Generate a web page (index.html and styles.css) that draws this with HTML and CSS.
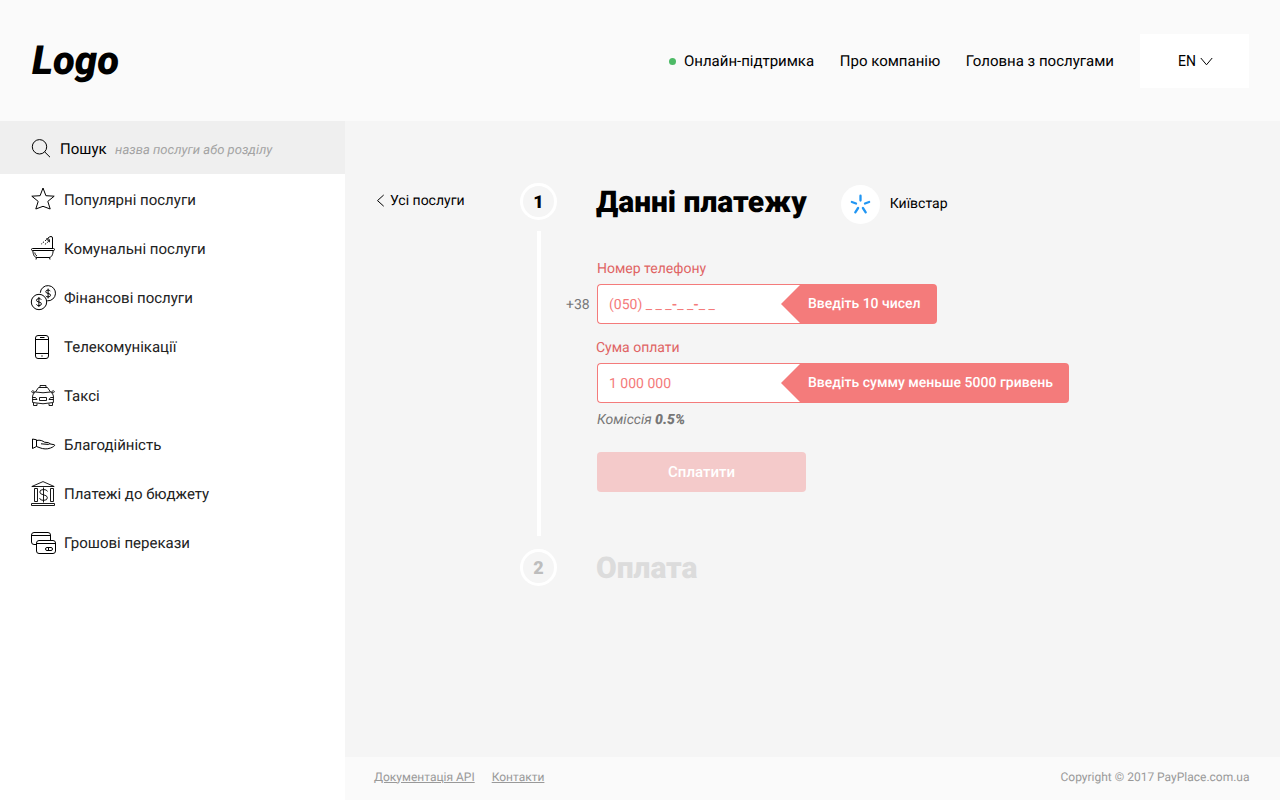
FILE: index.html
```html
<!DOCTYPE html>
<html lang="uk">
<head>
<meta charset="utf-8">
<title>PayPlace</title>
<link rel="stylesheet" href="styles.css">
</head>
<body>
<div class="page">
  <header class="header">
    <a class="logo">Logo</a>
    <nav class="topnav">
      <a class="topnav-link support"><span class="dot"></span>Онлайн-підтримка</a>
      <a class="topnav-link about">Про компанію</a>
      <a class="topnav-link home">Головна з послугами</a>
      <button class="lang">EN<svg class="chevron" width="13" height="9" viewBox="0 0 13 9"><path d="M.8 1 6.500 7.800 12.200 1"/></svg></button>
    </nav>
  </header>
  <div class="body">
    <aside class="sidebar">
      <div class="search">
        <svg class="icon" width="20" height="20" viewBox="0 0 20 20"><circle cx="8.500" cy="7.800" r="7.200"/><path d="M13.600 12.800 19 18.200"/></svg>
        <span class="search-label">Пошук</span><span class="search-hint">назва послуги або розділу</span>
      </div>
      <ul class="menu">
        <li class="menu-item"><svg class="icon" width="26" height="26" viewBox="0 0 26 26"><path d="M13 1 15.900 8.700 24.200 9.200 17.800 14.400 20.200 22 13 19.300 5.800 22 8.200 14.400 1.800 9.200 10.100 8.700Z"/></svg><span class="label-popular">Популярні послуги</span></li>
        <li class="menu-item"><svg class="icon" width="26" height="26" viewBox="0 0 26 26"><rect x="1.500" y="12.500" width="23" height="2" rx="1"/><path d="M2.800 14.500C3.200 19 4.500 21.500 7 21.500H19C21.500 21.500 22.800 19 23.200 14.500M6.500 21.500 6 23.500M19.500 21.500 20 23.500M4.800 16.500C5 18 5.600 19.300 7 20M22.500 12.500V2Q22.500.5 21 .5 19 .5 18 2.200M16 2.500 20 6.200M16.800 3C17.600 1.800 20.300 3.200 19.300 5.400"/><path class="drops" d="M16.300 3.800 11 8.300M18.500 5.500 14 9.200"/></svg><span class="label-utility">Комунальні послуги</span></li>
        <li class="menu-item"><svg class="icon" width="26" height="26" viewBox="0 0 26 26"><path d="M10.300 7.800A7.600 7.600 0 1 1 17.200 15.800"/><circle cx="9" cy="17" r="7.700"/><path d="M11.300 14.700Q10.900 13.600 8.900 13.600 6.500 13.600 6.500 15.300 6.500 16.700 8.900 17 11.400 17.300 11.400 18.900 11.400 20.600 8.900 20.600 6.800 20.600 6.400 19.400M8.900 12V22M20.300 6.200Q19.900 5.100 18.100 5.100 15.800 5.100 15.800 6.700 15.800 8.100 18.100 8.400 20.500 8.700 20.500 10.300 20.500 11.900 18.100 11.900 16.200 11.900 15.800 10.800M18.100 3.600V13.400"/></svg><span class="label-finance">Фінансові послуги</span></li>
        <li class="menu-item"><svg class="icon" width="26" height="26" viewBox="0 0 26 26"><rect x="5.500" y="1.500" width="13" height="23" rx="2.500"/><path d="M5.500 5.500H18.500M5.500 19.500H18.500M10 3.500H14.500M11.300 22H12.700"/></svg><span class="label-telecom">Телекомунікації</span></li>
        <li class="menu-item"><svg class="icon thin" width="26" height="26" viewBox="0 0 26 26"><path d="M10 4.500V2.500H16V4.500M5.500 9 8.500 4.500H17.500L20.500 9Q13 10.500 5.500 9ZM5.500 9Q3 10 2.600 13V19.500Q13 22 23.400 19.500V13Q23 10 20.500 9M4.800 9Q2.500 6.500 1.500 8.700 2 10 4.300 9.700M21.200 9Q23.500 6.500 24.500 8.700 24 10 21.700 9.700M2.600 14.500H5.500L7 16.500H2.600M23.400 14.500H20.500L19 16.500H23.400M9.500 14.500H16.500V17.500H9.500ZM3.500 20V22.500H7V20.500M22.500 20V22.500H19V20.500"/></svg><span class="label-taxi">Таксі</span></li>
        <li class="menu-item"><svg class="icon" width="26" height="26" viewBox="0 0 26 26"><path d="M2.500 7 6.500 7.800V14.500L2.500 16.500ZM6.500 8.500C10 7.500 13 9 14.500 10.200L18.500 10.700C20.300 11 20 12.500 18 12.400L11 11.800M19.500 11.800 24 12.700C26 13 23.500 15 20.500 16 17 17.500 13 17 10 15.800L6.500 14.500"/></svg><span class="label-charity">Благодійність</span></li>
        <li class="menu-item"><svg class="icon thin" width="26" height="26" viewBox="0 0 26 26"><path d="M1.800 5.500H24.200L13 .6ZM1.500 22.500H24.500V24.500H1.500ZM4.500 7.500H7.500V20.500H4.500ZM20.500 7.500H23.500V20.500H20.500ZM17.500 10.500Q17 8.500 13.500 8.500 9.800 8.500 9.800 11 9.800 13.200 13.500 13.800 17.400 14.500 17.400 16.800 17.400 19.400 13.500 19.400 10 19.400 9.500 17M13.500 6.500V21.500"/></svg><span class="label-budget">Платежі до бюджету</span></li>
        <li class="menu-item"><svg class="icon" width="26" height="26" viewBox="0 0 26 26"><path d="M6 14.500H4Q1.500 14.500 1.500 12V5Q1.500 2.500 4 2.500H18Q20.500 2.500 20.500 5V10M1.500 5.500H20.500M6.500 13.500H25.500"/><rect x="6.500" y="10.500" width="19" height="13" rx="2.500"/><rect x="15.500" y="17.500" width="7" height="3" rx="1.500"/><path d="M18.500 17.500V20.500"/></svg><span class="label-transfer">Грошові перекази</span></li>
      </ul>
    </aside>
    <div class="content">
      <main class="main">
        <a class="back"><svg class="chevron" width="9" height="13" viewBox="0 0 9 13"><path d="M7.700 1 1.500 6.600 7.700 12.200"/></svg>Усі послуги</a>
        <div class="stepper">
          <span class="step">1</span>
          <span class="line"></span>
          <span class="step step-next">2</span>
        </div>
        <div class="payment">
          <div class="heading">
            <h1 class="title">Данні платежу</h1>
            <span class="provider-logo"><svg width="22" height="22" viewBox="0 0 22 22"><path d="M11.500 1.700V6.600M2.900 8 7 9.500M20.100 8 16 9.500M9.100 14 6.300 18.300M13.900 14 16.700 18.300"/></svg></span>
            <span class="provider">Київстар</span>
          </div>
          <form class="form">
            <label class="label phone-label">Номер телефону</label>
            <div class="row">
              <span class="prefix">+38</span>
              <div class="field"><span class="value phone">(050) _ _ _<b>-</b>_ _<b>-</b>_ _</span></div>
              <div class="error error-phone"><span>Введіть 10 чисел</span></div>
            </div>
            <label class="label sum-label">Сума оплати</label>
            <div class="row">
              <span class="prefix"></span>
              <div class="field"><span class="value sum">1 000 000</span></div>
              <div class="error error-sum"><span>Введіть сумму меньше 5000 гривень</span></div>
            </div>
            <p class="fee">Коміссія <b>0.5%</b></p>
            <button class="pay" type="button">Сплатити</button>
          </form>
          <h2 class="title title-next">Оплата</h2>
        </div>
      </main>
      <footer class="footer">
        <a class="footer-link api">Документація API</a>
        <a class="footer-link contacts">Контакти</a>
        <span class="copyright">Copyright © 2017 PayPlace.com.ua</span>
      </footer>
    </div>
  </div>
</div>
</body>
</html>
```

FILE: styles.css
```css
* { box-sizing: border-box; }
body { margin: 0; font-family: Roboto, "Noto Sans", sans-serif; font-size: 15px; color: #000; text-rendering: geometricPrecision; }
h1, h2, p, ul { margin: 0; padding: 0; }
button { font: inherit; border: 0; padding: 0; }
.page { width: 1280px; height: 800px; display: flex; flex-direction: column; overflow: hidden; }

.header { height: 121px; background: #fafafa; display: flex; align-items: center; justify-content: space-between; padding: 0 31px 0 32px; }
.logo { font-size: 40px; font-weight: 900; font-style: italic; line-height: 48px; }
.topnav { display: flex; align-items: center; gap: 26px; }
.topnav-link { display: flex; align-items: center; white-space: nowrap; }
.about { margin-right: -.4px; }
.support { margin-right: -.3px; }
.dot { width: 7px; height: 7px; border-radius: 50%; background: #4dba66; margin: 1px 8px 0 0; }
.lang { width: 109px; height: 54px; background: #fff; display: flex; align-items: center; justify-content: center; font-size: 14px; color: #000; gap: 4px; padding-left: 2px; }
.lang .chevron { margin-top: 2px; }
.chevron { fill: none; stroke: #000; stroke-width: 1; }

.body { flex: 1; display: flex; }
.sidebar { width: 345px; background: #fff; }
.search { height: 53px; background: #efefef; display: flex; align-items: center; padding: 2px 0 0 31px; }
.search-label { margin-left: 9px; }
.search-hint { margin: 3px 0 0 8.5px; font-size: 13px; font-style: italic; color: #a3a3a3; letter-spacing: .02px; }
.icon { flex: none; fill: none; stroke: #000; stroke-width: 1; stroke-linejoin: round; }
.thin { stroke-width: .9; }
.drops { stroke-dasharray: 1.6 1.4; }
.menu { list-style: none; padding-top: 1px; }
.menu-item { height: 49px; display: flex; align-items: center; padding-left: 30px; gap: 8px; color: #222; }

.content { flex: 1; display: flex; flex-direction: column; background: #f5f5f5; }
.main { flex: 1; display: flex; padding-top: 62px; }
.back { width: 175px; height: 36px; padding-left: 31px; display: flex; align-items: center; gap: 5px; font-size: 14px; }
.back .chevron { margin-top: -2px; }
.stepper { width: 37px; display: flex; flex-direction: column; align-items: center; }
.step { width: 37px; height: 37px; padding-top: 1px; border: 3px solid #fff; border-radius: 50%; display: flex; align-items: center; justify-content: center; font-size: 18px; font-weight: 900; }
.step-next { color: #bdbdbd; }
.line { width: 4px; height: 305px; margin: 11px 0 13px; background: #fff; }
.payment { flex: 1; }
.heading { display: flex; height: 41px; padding-left: 39px; align-items: center; }
.title { font-size: 30px; font-weight: 900; line-height: 38px; white-space: nowrap; }
.heading .title { margin-top: -2px; }
.provider-logo { width: 39px; height: 39px; margin: 2px 10px 0 34px; border-radius: 50%; background: #fff; display: flex; align-items: center; justify-content: center; }
.provider-logo svg { fill: none; stroke: #2196f3; stroke-width: 2.3; stroke-linecap: round; }
.provider { font-size: 14px; margin-top: 1px; }
.form { padding-top: 34px; }
.label { display: block; height: 26px; line-height: 22px; padding-left: 40px; font-size: 14px; color: #e06464; }
.sum-label { margin-top: 13px; height: 26px; padding-left: 39px; }
.row { display: flex; height: 40px; }
.prefix { width: 40px; padding-left: 9px; line-height: 42px; font-size: 14px; color: #777; }
.field { width: 203px; border: 1px solid #f47b7b; border-right: 0; border-radius: 4px 0 0 4px; background: #fff; padding-left: 11px; line-height: 40px; font-size: 14px; color: #f47b7b; }
.error { position: relative; background: #f47b7b; color: #fff; border-radius: 0 4px 4px 0; line-height: 40px; padding-left: 8px; font-size: 14px; font-weight: 500; white-space: nowrap; }
.error::before { content: ""; position: absolute; left: -19px; top: 1px; border: 19px solid transparent; border-left: 0; border-right-color: #f47b7b; }
.error-phone { width: 137px; }
.error-sum { width: 269px; letter-spacing: .01px; }
.fee { height: 32px; line-height: 34px; padding-left: 40px; font-size: 14px; font-style: italic; color: #777; }
.fee b { font-weight: 900; }
.pay { display: block; width: 209px; height: 40px; margin: 17px 0 0 40px; border-radius: 4px; background: #f4caca; color: #fff; font-size: 15px; font-weight: 500; }
.title-next { margin: 58px 0 0 39px; color: #dcdcdc; }

.footer { height: 43px; background: #fafafa; display: flex; align-items: center; padding: 0 30.5px 4px 29px; font-size: 12px; color: #999; }
.footer-link { text-decoration: underline; margin-right: 17px; }
.copyright { margin-left: auto; }
```
